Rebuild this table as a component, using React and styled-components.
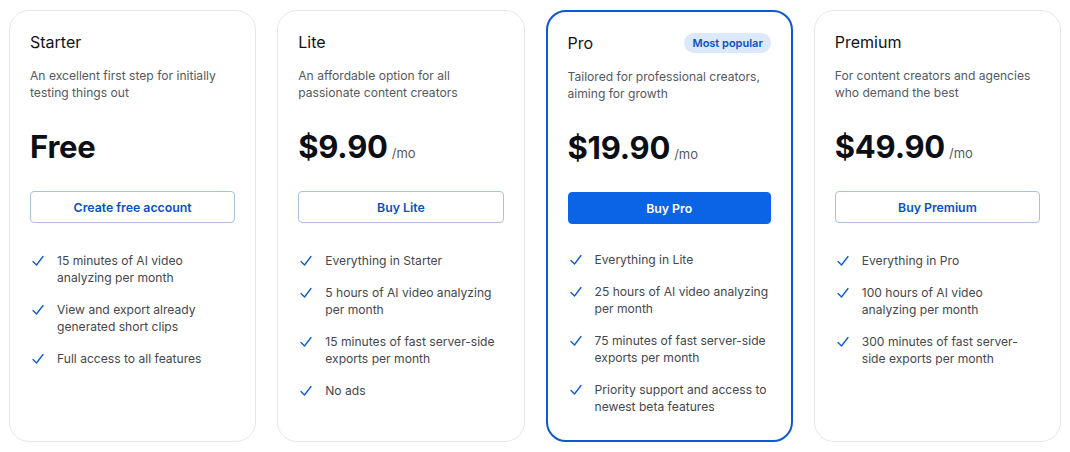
import React from 'react';
import styled, { createGlobalStyle } from 'styled-components';

const GlobalStyle = createGlobalStyle`
  * { box-sizing: border-box; }
  body {
    margin: 0;
    background: #ffffff;
    font-family: Inter, "Noto Sans", Arial, sans-serif;
    -webkit-font-smoothing: antialiased;
  }
`;

const Grid = styled.div`
  display: grid;
  grid-template-columns: repeat(4, 1fr);
  gap: 21px;
  padding: 10px 9px;
  height: 452px;
`;

const Card = styled.div`
  display: flex;
  flex-direction: column;
  border: ${(p) => (p.$featured ? '2px solid #0b5ad4' : '1px solid #e6e7eb')};
  border-radius: 20px;
  padding: 21px 20px;
  background: #fff;
  height: 432px;
`;

const Head = styled.div`
  display: flex;
  align-items: center;
  justify-content: space-between;
  height: 20px;
`;

const Title = styled.h3`
  margin: 0;
  font-size: 16px;
  font-weight: 400;
  color: #111318;
  line-height: 20px;
`;

const Badge = styled.span`
  background: #dce9fb;
  color: #0a4fc2;
  font-size: 11px;
  font-weight: 600;
  padding: 0 8px;
  height: 20px;
  line-height: 20px;
  border-radius: 10px;
`;

const Desc = styled.p`
  margin: 15px 0 0;
  font-size: 12.1px;
  line-height: 17px;
  color: #555961;
  min-height: 34px;
`;

const PriceRow = styled.div`
  display: flex;
  align-items: baseline;
  gap: 4px;
  margin-top: 26px;
  height: 40px;
`;

const Price = styled.span`
  font-size: 31px;
  line-height: 40px;
  font-weight: 700;
  color: #0c0e16;
  letter-spacing: -0.2px;
`;

const Per = styled.span`
  font-size: 13px;
  color: #55595f;
`;

const Button = styled.button`
  margin-top: 24px;
  height: 32px;
  width: 100%;
  border-radius: 4px;
  font-family: inherit;
  font-size: 12.3px;
  font-weight: 600;
  cursor: pointer;
  border: 1px solid ${(p) => (p.$primary ? '#0b63e6' : '#a9c1e0')};
  background: ${(p) => (p.$primary ? '#0b63e6' : '#fff')};
  color: ${(p) => (p.$primary ? '#fff' : '#0a4fc6')};
`;

const List = styled.ul`
  list-style: none;
  margin: ${(p) => (p.$featured ? '27px' : '29px')} 0 0;
  padding: 0;
  display: flex;
  flex-direction: column;
  gap: 15px;
`;

const Item = styled.li`
  display: flex;
  align-items: flex-start;
  gap: 13px;
  font-size: 12.1px;
  line-height: 17px;
  color: #44474e;
  padding-left: 2px;
`;

const Check = () => (
  <svg width="12" height="17" viewBox="0 0 12 17" fill="none" style={{ flexShrink: 0 }}>
    <path d="M1 9.5 L4.5 13 L11 4.5" stroke="#0b5ad4" strokeWidth="1.3" strokeLinecap="round" strokeLinejoin="round" />
  </svg>
);

const plans = [
  {
    name: 'Starter',
    desc: 'An excellent first step for initially testing things out',
    price: 'Free',
    button: 'Create free account',
    features: ['15 minutes of AI video analyzing per month', 'View and export already generated short clips', 'Full access to all features'],
  },
  {
    name: 'Lite',
    desc: 'An affordable option for all passionate content creators',
    price: '$9.90',
    per: true,
    button: 'Buy Lite',
    features: ['Everything in Starter', '5 hours of AI video analyzing per month', '15 minutes of fast server-side exports per month', 'No ads'],
  },
  {
    name: 'Pro',
    desc: 'Tailored for professional creators, aiming for growth',
    price: '$19.90',
    per: true,
    button: 'Buy Pro',
    featured: true,
    features: ['Everything in Lite', '25 hours of AI video analyzing per month', '75 minutes of fast server-side exports per month', 'Priority support and access to newest beta features'],
  },
  {
    name: 'Premium',
    desc: 'For content creators and agencies who demand the best',
    price: '$49.90',
    per: true,
    button: 'Buy Premium',
    features: ['Everything in Pro', '100 hours of AI video analyzing per month', '300 minutes of fast server-side exports per month'],
  },
];

const App = () => (
  <>
    <GlobalStyle />
    <Grid>
      {plans.map((plan) => (
        <Card key={plan.name} $featured={plan.featured}>
          <Head>
            <Title>{plan.name}</Title>
            {plan.featured && <Badge>Most popular</Badge>}
          </Head>
          <Desc>{plan.desc}</Desc>
          <PriceRow>
            <Price>{plan.price}</Price>
            {plan.per && <Per>/mo</Per>}
          </PriceRow>
          <Button $primary={plan.featured}>{plan.button}</Button>
          <List $featured={plan.featured}>
            {plan.features.map((f) => (
              <Item key={f}>
                <Check />
                <span>{f}</span>
              </Item>
            ))}
          </List>
        </Card>
      ))}
    </Grid>
  </>
);

export default App;
